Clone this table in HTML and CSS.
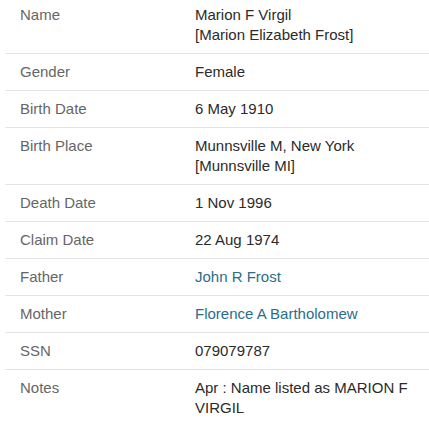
FILE: index.html
```html
<!DOCTYPE html>
<html>
<head>
<meta charset="utf-8">
<link rel="stylesheet" href="styles.css">
</head>
<body>
<div class="record">
  <div class="row first"><div class="label">Name</div><div class="value">Marion F Virgil<br>[Marion Elizabeth Frost]</div></div>
  <div class="row"><div class="label">Gender</div><div class="value">Female</div></div>
  <div class="row"><div class="label">Birth Date</div><div class="value">6 May 1910</div></div>
  <div class="row"><div class="label">Birth Place</div><div class="value">Munnsville M, New York<br>[Munnsville MI]</div></div>
  <div class="row"><div class="label">Death Date</div><div class="value">1 Nov 1996</div></div>
  <div class="row"><div class="label">Claim Date</div><div class="value">22 Aug 1974</div></div>
  <div class="row"><div class="label">Father</div><div class="value"><a class="link" href="#">John R Frost</a></div></div>
  <div class="row"><div class="label">Mother</div><div class="value"><a class="link" href="#">Florence A Bartholomew</a></div></div>
  <div class="row"><div class="label">SSN</div><div class="value">079079787</div></div>
  <div class="row last"><div class="label">Notes</div><div class="value">Apr : Name listed as MARION F VIRGIL</div></div>
</div>
</body>
</html>
```
FILE: styles.css
```css
html, body {
  margin: 0;
  padding: 0;
  background: #fff;
}
body {
  font-family: "Liberation Sans", Arial, sans-serif;
  overflow: hidden;
}
.record {
  margin-left: 5px;
}
.row {
  display: grid;
  grid-template-columns: 175px 1fr;
  padding: 8px 14px 8px 15px;
  border-bottom: 1px solid #e3e3e3;
  line-height: 20px;
  font-size: 15px;
}
.row.first {
  padding-top: 5px;
}
.row.last {
  border-bottom: none;
}
.label {
  color: #666666;
}
.value {
  color: #2b2b2b;
}
.link {
  color: #2a6d8c;
  text-decoration: none;
}
```
